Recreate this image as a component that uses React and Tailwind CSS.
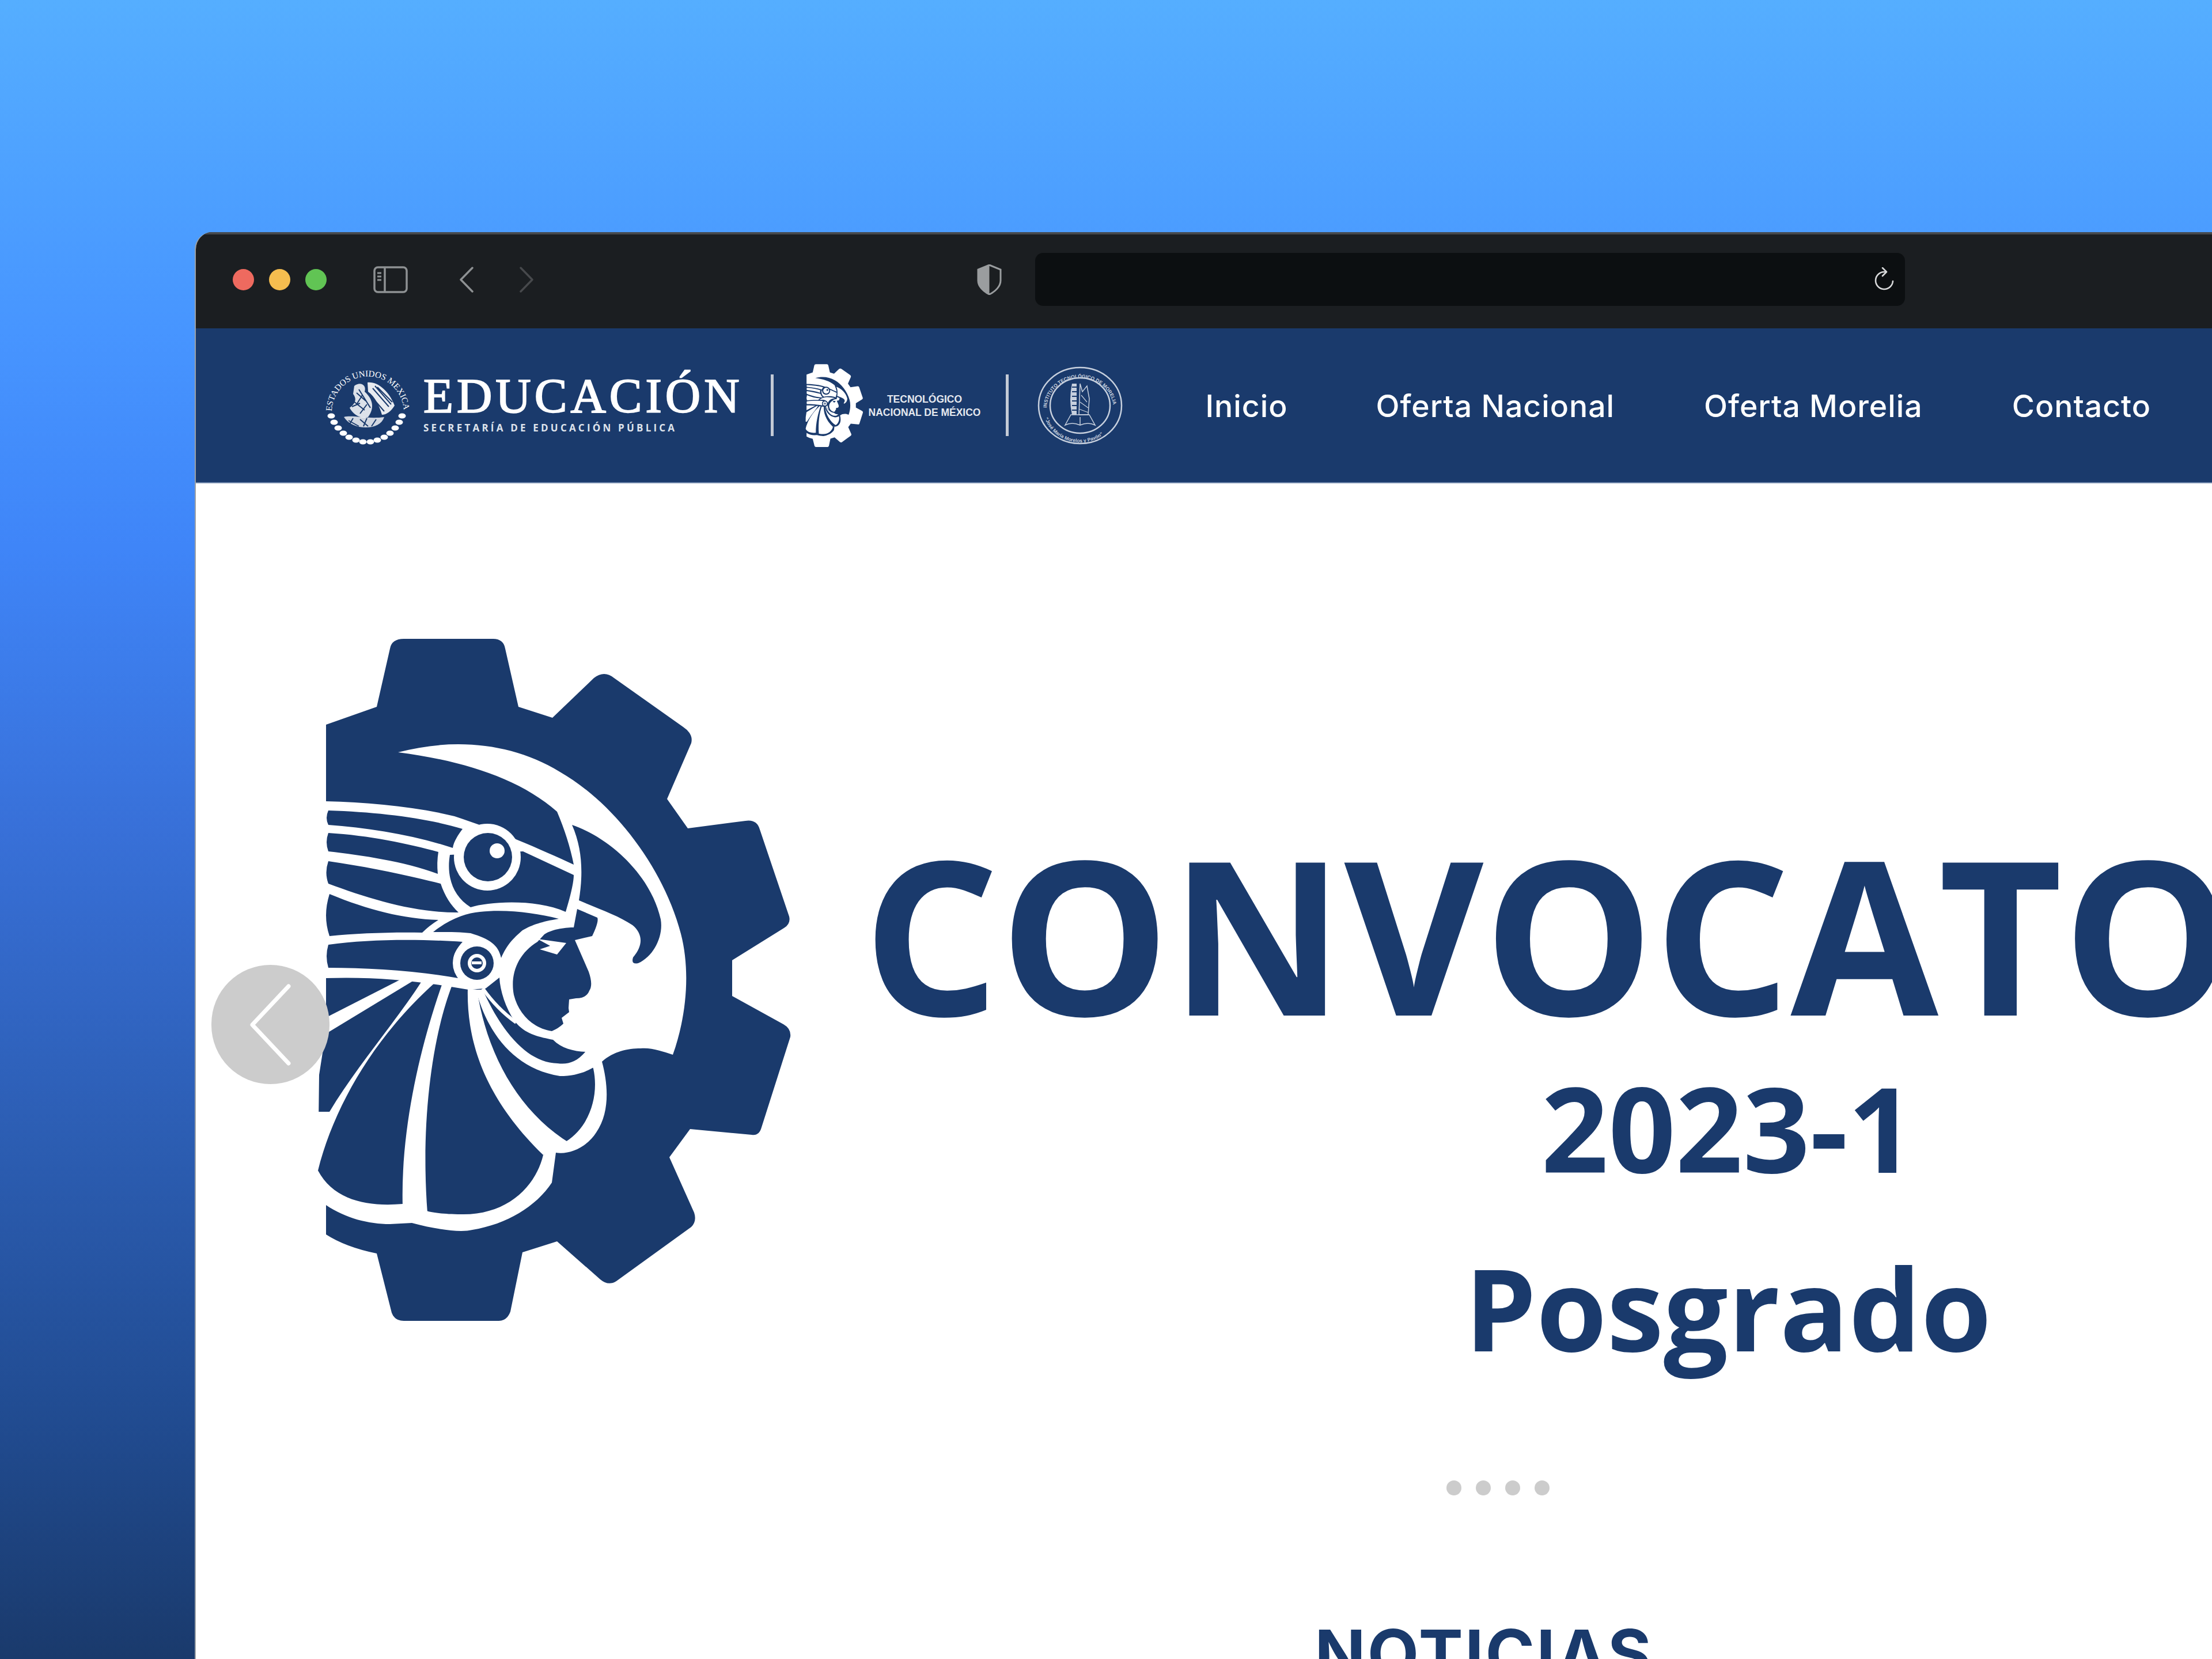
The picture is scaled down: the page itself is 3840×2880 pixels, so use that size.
import React from "react";

const navLinks = [
  { label: "Inicio", cls: "ml-[144px]" },
  { label: "Oferta Nacional", cls: "ml-[153px]" },
  { label: "Oferta Morelia", cls: "ml-[155px]" },
  { label: "Contacto", cls: "ml-[155px]" },
];

const TecnmGear = ({ fg, bg, className }) => (
  <svg viewBox="540 1100 840 1200" className={className} fill={fg}>
    {/* gear */}
    <path d="M566 1258 L654 1227 L677 1126 Q680 1109 701 1109 L856 1109 Q874 1109 877 1126 L900 1227 L959 1246 L1031 1177 Q1049 1163 1066 1177 L1186 1262 Q1204 1274 1200 1290 L1158 1387 L1194 1438 L1294 1425 Q1314 1422 1319 1440 L1370 1591 Q1373 1604 1361 1611 L1271 1667 L1271 1729 L1358 1777 Q1374 1785 1372 1800 L1322 1957 Q1318 1972 1305 1970 L1198 1960 L1162 2009 L1205 2105 Q1210 2120 1200 2130 L1070 2224 Q1056 2233 1042 2221 L967 2155 L907 2174 L886 2277 Q880 2293 866 2293 L701 2293 Q685 2293 680 2279 L654 2176 Q600 2165 566 2143 L566 1700 Z" />
    {/* white head area */}
    <path fill={bg} d="M691 1306 C790 1280 890 1290 972 1340 C1060 1390 1150 1500 1182 1621 C1200 1690 1190 1770 1168 1831 C1150 1825 1130 1818 1112 1820 C1090 1820 1065 1825 1045 1843 C1055 1880 1060 1930 1035 1966 C1020 1990 990 2005 965 2001 L958 2053 C930 2095 880 2125 820 2135 C800 2140 760 2135 715 2123 L677 2125 C640 2125 600 2115 566 2092 L530 2092 L530 1391 L566 1391 C640 1393 720 1400 789 1417 C860 1440 940 1475 996 1501 C990 1470 980 1440 967 1409 C900 1350 800 1320 691 1306 Z" />
    {/* headdress stripes */}
    <path d="M570 1407 C660 1410 740 1420 803 1439 C795 1450 788 1460 786 1472 C720 1450 640 1437 570 1432 Q564 1420 570 1407 Z" />
    <path d="M570 1446 C640 1450 710 1465 761 1479 Q758 1497 760 1517 C700 1495 630 1485 570 1478 Q564 1462 570 1446 Z" />
    <path d="M570 1495 C640 1505 710 1520 765 1534 C772 1555 783 1572 796 1584 C720 1585 640 1560 570 1534 Q563 1515 570 1495 Z" />
    <path d="M572 1552 C640 1580 700 1595 761 1597 Q745 1607 733 1619 C680 1618 620 1620 572 1625 Q560 1590 572 1552 Z" />
    <path d="M570 1640 C640 1630 730 1630 803 1635 Q785 1655 787 1670 Q787 1685 795 1698 C720 1685 640 1680 570 1680 Q564 1660 570 1640 Z" />
    {/* big eye */}
    <path d="M781 1484 C775 1520 785 1555 817 1575 C850 1565 930 1560 982 1583 C992 1550 996 1530 996 1519 L908 1478 Z" />
    <circle cx="846" cy="1488" r="58" fill={bg} />
    <circle cx="847" cy="1488" r="42" />
    <circle cx="863" cy="1477" r="13" fill={bg} />
    {/* arc over the small eye */}
    <path d="M752 1618 C780 1595 810 1585 833 1583 C880 1578 930 1585 970 1595 C940 1600 925 1605 907 1615 C890 1630 880 1640 870 1663 C865 1640 850 1630 817 1620 C800 1618 775 1618 752 1618 Z" />
    {/* beak */}
    <path d="M993 1432 C1060 1455 1130 1520 1147 1596 C1152 1625 1135 1660 1108 1672 Q1095 1675 1099 1662 C1118 1640 1115 1620 1098 1606 C1075 1590 1040 1578 1005 1563 C1012 1520 1012 1475 993 1432 Z" />
    {/* face */}
    <path d="M1002 1578 L1037 1593 Q1040 1600 1028 1625 L998 1632 L1022 1687 Q1030 1710 1023 1720 Q1018 1733 1000 1733 L988 1735 L987 1750 L988 1757 L975 1767 L978 1777 Q970 1785 958 1790 C925 1785 900 1760 892 1727 C885 1690 900 1655 933 1635 L945 1622 C960 1612 985 1610 996 1610 Z" />
    <path fill={bg} d="M933 1630 L983 1637 L967 1657 L937 1648 L955 1642 Z" />
    {/* feathers */}
    <path d="M566 1698 C650 1695 730 1703 813 1718 L843 1716 L867 1697 C868 1720 878 1750 893 1772 C910 1795 935 1800 960 1805 C975 1820 995 1825 1017 1826 L1030 1855 C1040 1900 1025 1955 982 1982 L943 2005 C930 2060 880 2110 800 2108 C770 2108 750 2105 740 2102 L699 2090 C640 2095 580 2085 552 2032 L554 1866 L566 1789 L566 1698 Z" />
    <path fill={bg} d="M700 1698 L725 1698 L565 1795 L555 1772 Z" />
    <path fill={bg} d="M733 1702 C690 1770 620 1850 572 1930 L535 1930 L535 2040 L552 2032 C580 1920 650 1800 755 1706 Z" />
    <path fill={bg} d="M768 1707 C735 1800 695 1950 699 2095 L742 2105 C730 1950 750 1800 785 1710 Z" />
    <path fill={bg} d="M812 1716 C810 1800 835 1900 943 2005 L990 1985 C900 1930 845 1830 828 1718 Z" />
    <path fill={bg} d="M826 1718 C845 1790 890 1855 972 1868 C1000 1868 1020 1860 1035 1850 L1017 1825 C1000 1845 985 1848 968 1846 C915 1845 870 1790 838 1718 Z" />
    <path fill="none" stroke={bg} strokeWidth="6" d="M838 1716 C855 1740 875 1760 896 1775" />
    {/* small eye */}
    <circle cx="828" cy="1672" r="42" fill={bg} />
    <circle cx="828" cy="1672" r="29" />
    <circle cx="828" cy="1672" r="16" fill={bg} />
    <circle cx="828" cy="1672" r="10" />
    <rect x="819" y="1669" width="17" height="5" fill={bg} />
  </svg>
);

const GobSeal = () => (
  <svg viewBox="0 0 150 136" className="w-[150px] h-[136px]" fill="#fff">
    <defs>
      <path id="seal-top" d="M13 82 A62 62 0 1 1 138 78" />
    </defs>
    <text className="font-['Liberation_Serif',serif]" fontSize="15" fill="#fff">
      <textPath href="#seal-top" startOffset="4">ESTADOS UNIDOS MEXICANOS</textPath>
    </text>
    {/* eagle */}
    <path d="M75 28 C92 26 112 42 122 68 C116 78 108 84 100 84 C96 70 88 52 76 44 Z" opacity=".9" />
    <path d="M84 38 L112 70 M92 36 L118 62 M78 48 L104 78 M88 34 L116 66" stroke="#1a3a6c" strokeWidth="2" fill="none" />
    <path d="M52 34 C62 26 74 32 70 44 C84 56 88 72 76 88 C64 92 50 84 44 72 C52 66 58 58 50 48 Z" opacity=".85" />
    <path d="M56 46 L72 60 M50 60 L70 76 M60 40 L80 72 M48 70 L62 64 M66 50 L56 66 M74 66 L62 82" stroke="#1a3a6c" strokeWidth="2" fill="none" />
    <path d="M34 88 C48 84 76 92 104 88 C100 100 88 106 72 106 C56 106 42 100 34 88 Z" opacity=".8" />
    <path d="M42 94 L60 104 M62 92 L76 104 M90 92 L82 104 M50 90 L44 100 M74 90 L68 104" stroke="#1a3a6c" strokeWidth="2" fill="none" />
    {/* wreath */}
    {[
      [12, 86], [17, 97], [24, 107], [33, 116], [43, 123], [55, 128], [67, 131], [80, 131],
      [92, 128], [104, 123], [114, 116], [123, 107], [130, 97], [135, 86],
    ].map(([cx, cy]) => (
      <ellipse key={`${cx}-${cy}`} cx={cx} cy={cy} rx="6.5" ry="4.5" />
    ))}
  </svg>
);

const ItmSeal = () => (
  <svg viewBox="0 0 148 136" className="w-[148px] h-[136px]" fill="none" stroke="#c7d0de">
    <defs>
      <path id="itm-top" d="M16 74 A58 54 0 0 1 132 74" />
      <path id="itm-bottom" d="M10 72 A64 60 0 0 0 138 72" />
    </defs>
    <ellipse cx="74" cy="68" rx="72" ry="66" strokeWidth="2.5" />
    <ellipse cx="74" cy="68" rx="52" ry="48" strokeWidth="2.5" />
    <text fontSize="8.5" fontWeight="700" fill="#c7d0de" stroke="none" className="font-['Liberation_Sans',sans-serif]">
      <textPath href="#itm-top" startOffset="2">INSTITUTO TECNOLÓGICO DE MORELIA</textPath>
    </text>
    <text fontSize="8.5" fontWeight="700" fill="#c7d0de" stroke="none" className="font-['Liberation_Sans',sans-serif]">
      <textPath href="#itm-bottom" startOffset="18">“José María Morelos y Pavón”</textPath>
    </text>
    {/* gear and torch */}
    <path d="M60 30 L68 30 L68 84 L60 84 Q54 58 60 30 Z" fill="#c7d0de" stroke="none" />
    <path d="M60 36 H68 M60 44 H68 M60 52 H68 M60 60 H68 M60 68 H68 M60 76 H68" stroke="#1a3a6c" strokeWidth="2" />
    <path d="M74 30 L78 44 L86 34 L90 56 L88 84 L72 84 Z" strokeWidth="1.5" />
    <path d="M76 50 L86 62 M74 62 L88 72 M72 74 L88 80" strokeWidth="1.2" />
    {/* book */}
    <path d="M48 102 L58 84 H90 L100 102 Q88 96 74 102 Q60 96 48 102 Z" strokeWidth="1.5" />
    <path d="M74 88 V102" strokeWidth="1.5" />
  </svg>
);

const Toolbar = () => (
  <div className="flex items-center h-[167px] bg-[#1b1e21] pl-[64px] pb-[7px] border-t-4 border-[#46494c]">
    <div className="flex items-center gap-[26px]">
      <div className="w-[37px] h-[37px] rounded-full bg-[#ee6a5f]" />
      <div className="w-[37px] h-[37px] rounded-full bg-[#f5bd4f]" />
      <div className="w-[37px] h-[37px] rounded-full bg-[#61c454]" />
    </div>
    <svg viewBox="0 0 60 47" className="w-[60px] h-[47px] ml-[81px]" fill="none" stroke="#8e9193" strokeWidth="3.5">
      <rect x="2" y="2" width="56" height="43" rx="6" />
      <path d="M20 2 V45" />
      <path d="M7 12 H14 M7 18 H14 M7 24 H14" strokeWidth="3" />
    </svg>
    <svg viewBox="0 0 24 45" className="w-[24px] h-[45px] ml-[90px]" fill="none" stroke="#8e9193" strokeWidth="3.5" strokeLinecap="round" strokeLinejoin="round">
      <path d="M22 2 L2 22.5 L22 43" />
    </svg>
    <svg viewBox="0 0 25 45" className="w-[25px] h-[45px] ml-[79px]" fill="none" stroke="#47494c" strokeWidth="3.5" strokeLinecap="round" strokeLinejoin="round">
      <path d="M3 2 L23 22.5 L3 43" />
    </svg>
    <svg viewBox="0 0 43 53" className="w-[43px] h-[53px] ml-[770px]">
      <path d="M21.5 1 L2 9 V28 C2 38 11 47 21.5 52 C32 47 41 38 41 28 V9 Z" fill="none" stroke="#9a9d9f" strokeWidth="3" />
      <path d="M21.5 1 L2 9 V28 C2 38 11 47 21.5 52 Z" fill="#9a9d9f" />
    </svg>
    <div className="flex items-center justify-end w-[1510px] h-[92px] ml-[58px] pr-[18px] rounded-[14px] bg-[#0c0f11]">
      <svg viewBox="0 0 36 42" className="w-[36px] h-[42px]" fill="none" stroke="#d9dadb" strokeWidth="2.6" strokeLinecap="round" strokeLinejoin="round">
        <path d="M19 8 A15 15 0 1 0 33 24" />
        <path d="M15 1 L22 8 L15 15" />
      </svg>
    </div>
  </div>
);

const Navbar = () => (
  <div className="flex items-center h-[269px] bg-[#1a3a6c] pl-[223px] border-b-2 border-[#6f87ab]">
    <GobSeal />
    <div className="ml-[22px] flex flex-col">
      <span className="font-['Liberation_Serif',serif] text-[85px] leading-[80px] tracking-[6px] [-webkit-text-stroke:2px_white] text-white whitespace-nowrap mt-[-8px]">
        EDUCACIÓN
      </span>
      <span className="font-['Open_Sans',sans-serif] font-bold text-[17px] leading-[20px] tracking-[4.2px] text-[#dfe4ec] whitespace-nowrap mt-[6px]">
        SECRETARÍA DE EDUCACIÓN PÚBLICA
      </span>
    </div>
    <div className="w-[5px] h-[107px] ml-[48px] bg-[#c3cad6]" />
    <TecnmGear fg="#fff" bg="#1a3a6c" className="w-[102px] h-[146px] ml-[54px]" />
    <div className="ml-[8px] w-[196px] flex flex-col items-center font-['Liberation_Sans',sans-serif] font-bold text-[#e6e9ef] leading-[23px] scale-x-[0.92]">
      <span className="text-[19px] whitespace-nowrap">TECNOLÓGICO</span>
      <span className="text-[19px] whitespace-nowrap">NACIONAL DE MÉXICO</span>
    </div>
    <div className="w-[5px] h-[107px] ml-[43px] bg-[#c3cad6]" />
    <div className="ml-[50px]">
      <ItmSeal />
    </div>
    {navLinks.map((l) => (
      <a key={l.label} className={`${l.cls} font-['Inter',sans-serif] font-medium text-[53.5px] leading-none tracking-[1px] text-white whitespace-nowrap mt-[2px]`}>
        {l.label}
      </a>
    ))}
  </div>
);

const Hero = () => (
  <div className="relative">
    <div className="flex pl-[200px] pt-[261px]">
      <TecnmGear fg="#1a3a6c" bg="#ffffff" className="w-[840px] h-[1200px] shrink-0" />
      <div className="w-[3000px] ml-[120px] shrink-0 pt-[333px] flex flex-col items-center font-['Open_Sans',sans-serif] font-bold text-[#1a3a6c] leading-none">
        <h1 className="text-[372px] leading-none whitespace-nowrap">CONVOCATORIA</h1>
        <p className="text-[204px] leading-none mt-[50px]">2023-1</p>
        <p className="text-[198px] leading-none mt-[111px]">Posgrado</p>
      </div>
    </div>
    <button className="absolute left-[27px] top-[836px] w-[205px] h-[207px] rounded-full bg-[#cccccc] flex items-center justify-center">
      <svg viewBox="0 0 72 142" className="w-[72px] h-[142px]" fill="none" stroke="#fff" strokeWidth="7" strokeLinecap="round" strokeLinejoin="round">
        <path d="M67 4 L4 71 L67 138" />
      </svg>
    </button>
  </div>
);

const App = () => (
  <div className="w-[3840px] h-[2880px] overflow-hidden pl-[338px] pt-[403px] bg-[linear-gradient(180deg,#55aeff_0%,#4795ff_20%,#3f85f8_33%,#3870d8_50%,#2b5cb0_70%,#214c92_85%,#1a3a6c_100%)]">
    <div className="w-[4522px] h-[2600px] rounded-tl-[30px] overflow-hidden bg-white border-l-2 border-[#9aa0a6]">
      <Toolbar />
      <Navbar />
      <Hero />
      <div className="flex justify-center gap-[25px] mt-[202px]">
        <span className="w-[26px] h-[26px] rounded-full bg-[#cccccc]" />
        <span className="w-[26px] h-[26px] rounded-full bg-[#cccccc]" />
        <span className="w-[26px] h-[26px] rounded-full bg-[#cccccc]" />
        <span className="w-[26px] h-[26px] rounded-full bg-[#cccccc]" />
      </div>
      <h2 className="mt-[217px] pr-[48px] text-center font-['Inter',sans-serif] font-bold text-[116px] leading-none tracking-[3px] text-[#1a3a6c]">
        NOTICIAS
      </h2>
    </div>
  </div>
);

export default App;
